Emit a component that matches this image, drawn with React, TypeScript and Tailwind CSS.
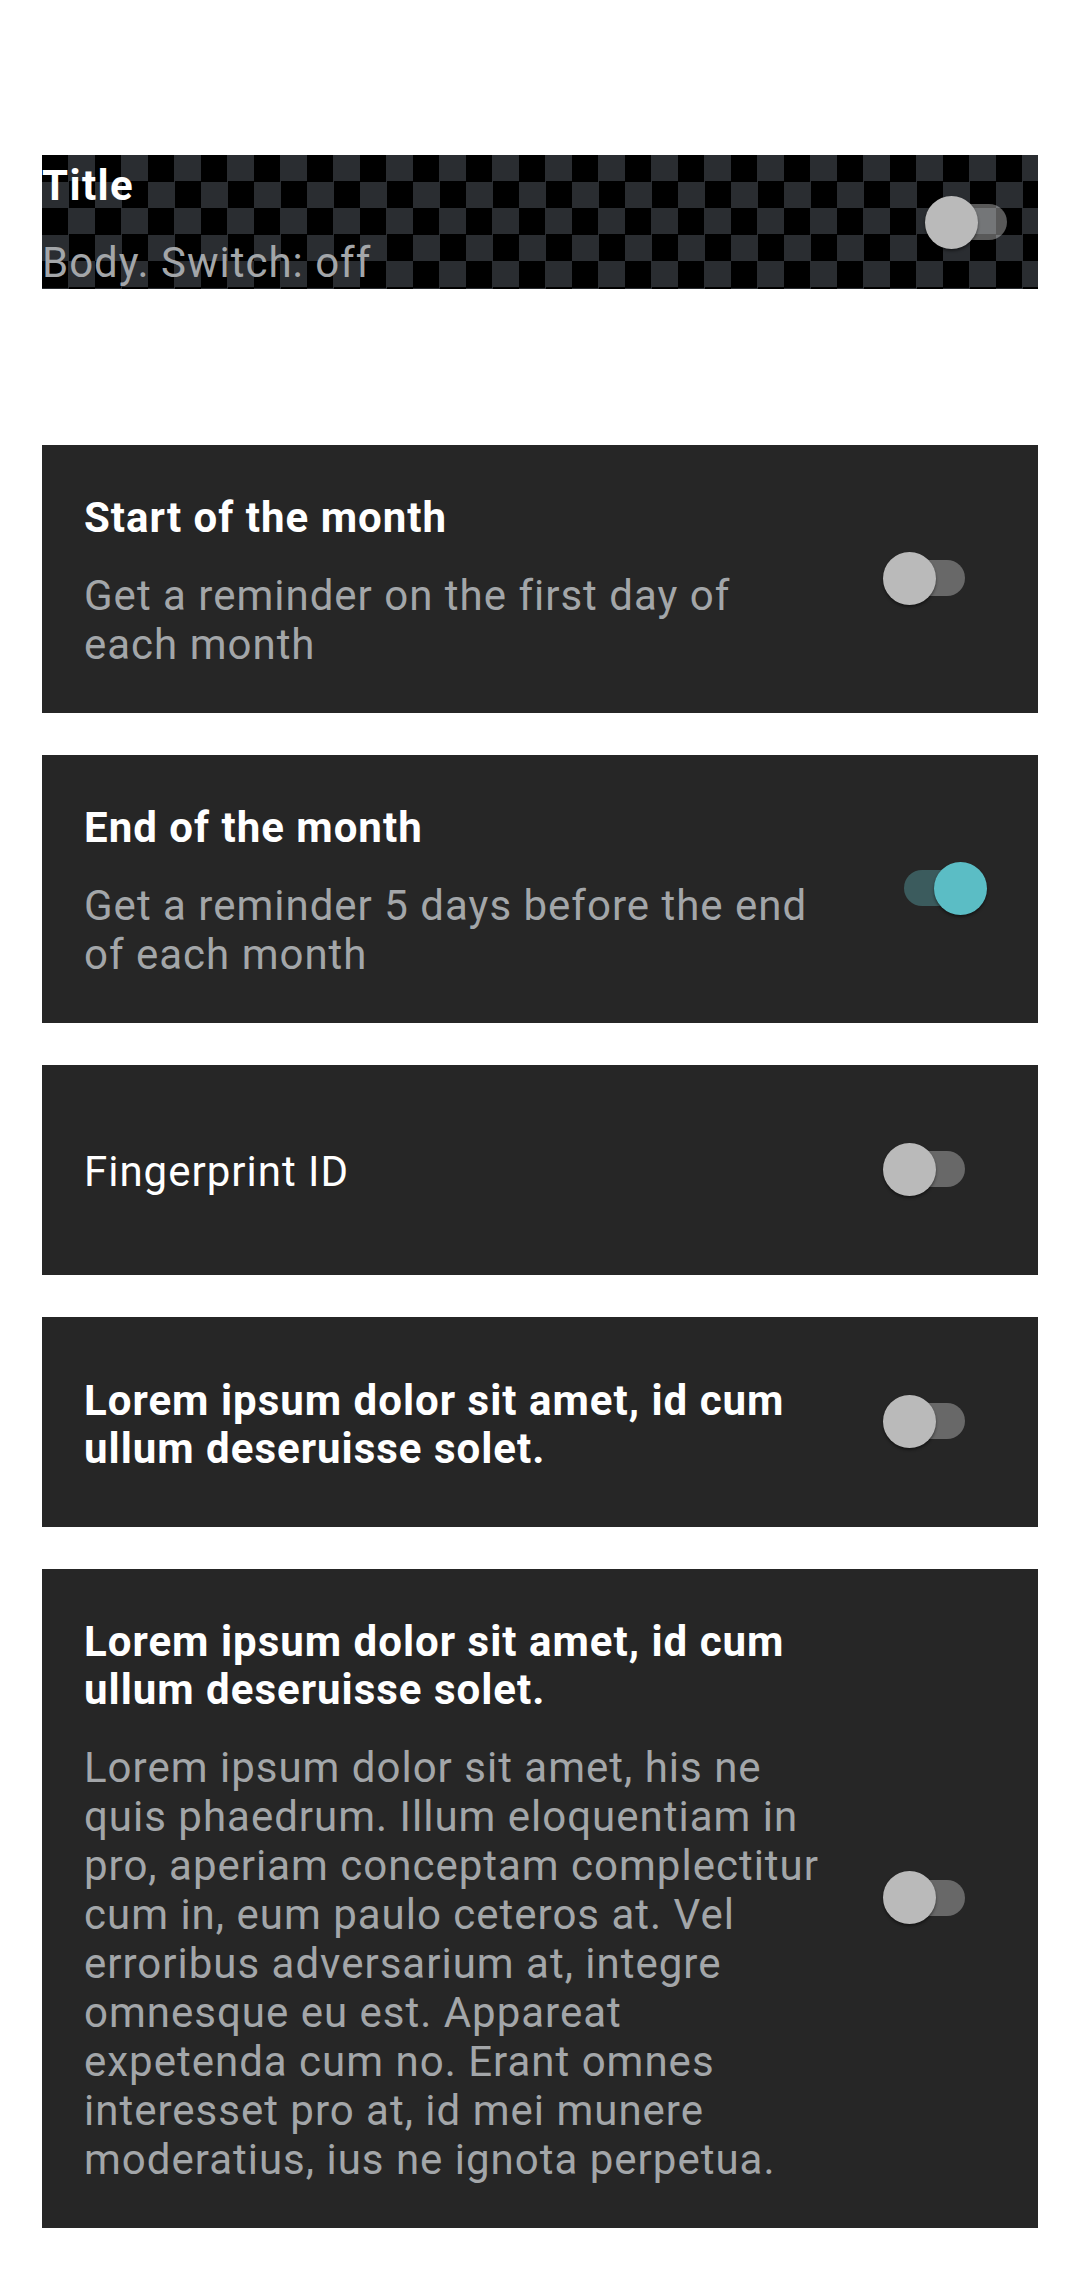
import React from 'react';

type SwitchProps = { on?: boolean; overlay?: boolean };

const Toggle: React.FC<SwitchProps> = ({ on = false, overlay = false }) => {
    const trackColor = on ? 'bg-[#3b5b5d]' : overlay ? 'bg-white/35' : 'bg-[#686868]';
    return (
        <div className="relative w-[104px] h-[53px] shrink-0">
            <div className={`absolute left-[21px] top-[8.5px] w-[61px] h-[36px] rounded-full ${trackColor}`} />
            <div
                className={`absolute top-0 w-[53px] h-[53px] rounded-full shadow-[0_2px_3px_rgba(0,0,0,0.45)] ${on ? 'left-[51px] bg-[#5bbdc5]' : 'left-0 bg-[#bababa]'}`}
            />
        </div>
    );
};

type Row = { title?: string; body?: string; plain?: string; on?: boolean };

const rows: Row[] = [
    { title: 'Start of the month', body: 'Get a reminder on the first day of each month' },
    { title: 'End of the month', body: 'Get a reminder 5 days before the end of each month', on: true },
    { plain: 'Fingerprint ID' },
    { title: 'Lorem ipsum dolor sit amet, id cum ullum deseruisse solet.' },
    {
        title: 'Lorem ipsum dolor sit amet, id cum ullum deseruisse solet.',
        body: 'Lorem ipsum dolor sit amet, his ne quis phaedrum. Illum eloquentiam in pro, aperiam conceptam complectitur cum in, eum paulo ceteros at. Vel erroribus adversarium at, integre omnesque eu est. Appareat expetenda cum no. Erant omnes interesset pro at, id mei munere moderatius, ius ne ignota perpetua.',
    },
];

const SettingCard: React.FC<{ row: Row }> = ({ row }) => (
    <div className="bg-[#262626] min-h-[210px] flex items-center pl-[42px] pr-[51px] pt-[42px] pb-[44px]">
        <div className={`w-[742px] ${row.plain ? 'pt-[5px]' : 'pt-[7px]'}`}>
            {row.title && (
                <div className="text-[42px] leading-[48px] font-bold text-white tracking-[1px]">{row.title}</div>
            )}
            {row.plain && (
                <div className="text-[42px] leading-[48px] text-white tracking-[1px]">{row.plain}</div>
            )}
            {row.body && (
                <div className="mt-[29px] text-[42px] leading-[49px] text-[#a3a6a9] tracking-[1px]">{row.body}</div>
            )}
        </div>
        <div className="flex-1" />
        <Toggle on={row.on} />
    </div>
);

export default function App() {
    return (
        <div className="min-h-[2271px] bg-white pt-[155px] px-[42px] font-['Roboto',sans-serif]">
            <div className="h-[134px] flex items-center justify-between bg-[image:repeating-conic-gradient(#2a2d31_0_25%,#000_0_50%)] bg-[length:53px_53px] pr-[9px]">
                <div className="self-start">
                    <div className="text-[42px] leading-[61px] font-bold text-white tracking-[1.4px]">Title</div>
                    <div className="mt-[22px] text-[42px] leading-[49px] text-[#a3a6a9] tracking-[1px]">Body. Switch: off</div>
                </div>
                <Toggle overlay />
            </div>

            <div className="mt-[156px] flex flex-col gap-[42px]">
                {rows.map((row, i) => (
                    <SettingCard key={i} row={row} />
                ))}
            </div>
        </div>
    );
}
